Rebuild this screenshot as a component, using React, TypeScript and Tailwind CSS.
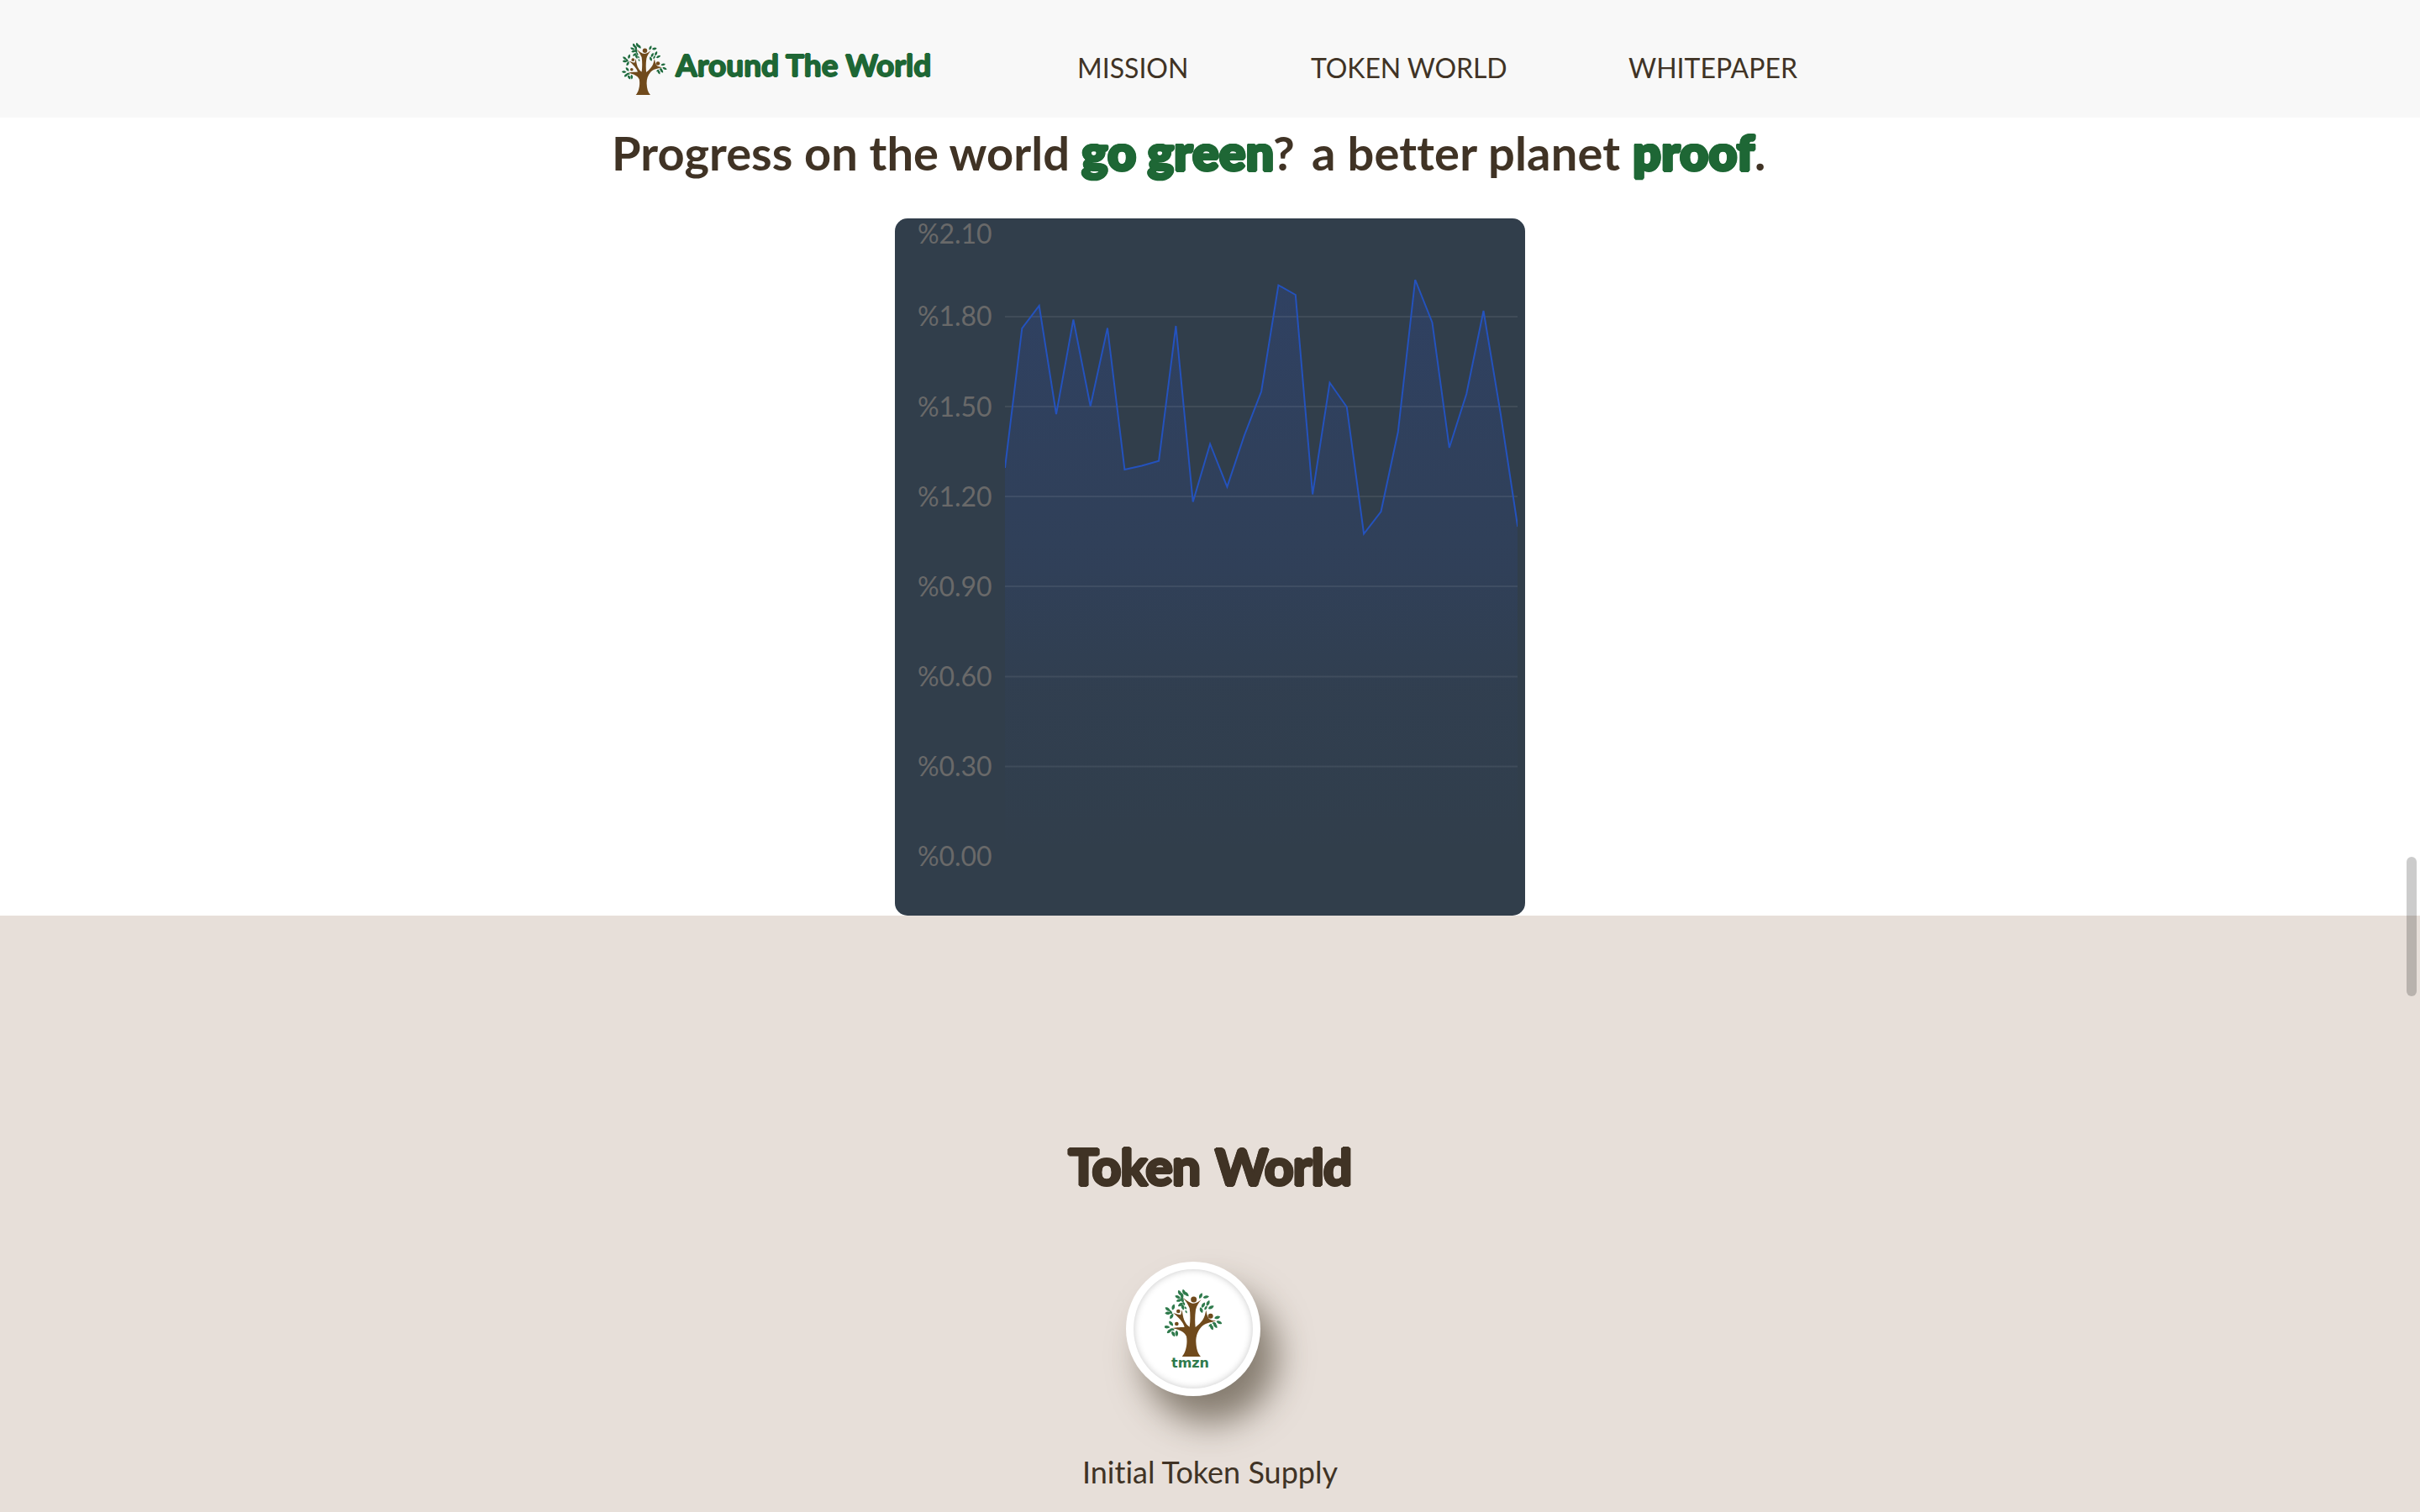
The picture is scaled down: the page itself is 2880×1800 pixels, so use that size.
const LEAVES: [number, number, number, number?][] = [
  [283, 176, 62], [276, 190, 25], [281, 202, -15], [298, 173, 70], [307, 180, 45], [291, 186, 80],
  [292, 200, 70], [286, 217, -35], [294, 226, 75], [304, 229, 60, 5], [306, 243, 65, 5], [298, 214, 70, 6],
  [358, 186, -65], [377, 190, -10], [384, 212, -65], [395, 227, -25], [367, 219, -60], [360, 237, 70],
  [376, 229, -60, 7], [240, 234, 35], [260, 226, -75], [241, 248, 0], [254, 259, -60], [251, 244, 55, 7],
  [237, 297, 5], [252, 285, 50], [246, 312, -40], [260, 322, 60], [272, 320, 88], [256, 306, 10, 7],
  [417, 263, -15], [424, 281, 25], [410, 292, 55], [397, 298, 65], [392, 291, -40, 6], [406, 284, 10, 6],
];

function TreeMark({ leaf, className }: { leaf: string; className: string }) {
  return (
    <svg viewBox="229 163 204 240" className={className} aria-hidden="true">
      <g fill="#704a1c">
        <path d="M291 403 C307 386 311 352 307 331 C300 314 280 306 256 301 C273 297 290 299 300 297 C295 280 278 262 260 247 C270 250 279 254 286 254 C289 249 289 242 291 236 C293 248 294 260 299 273 C305 285 310 292 318 297 C321 275 321 250 318 230 C312 215 303 202 293 191 C305 200 318 213 331 213 C343 213 351 206 360 199 C350 212 343 222 340 236 C337 258 337 278 339 298 C354 288 367 272 371 260 C374 252 375 244 377 237 C379 248 381 258 386 266 C392 274 402 274 412 276 C390 281 372 284 360 297 C346 313 341 330 341 350 C342 375 347 392 358 403 Z" />
        <circle cx="333" cy="199" r="10.5" />
        <circle cx="278" cy="241" r="7" />
        <circle cx="272" cy="286" r="7" />
        <circle cx="393" cy="258" r="9" />
      </g>
      <g fill={leaf}>
        {LEAVES.map(([x, y, a, r = 9], i) => (
          <path
            key={i}
            transform={`translate(${x} ${y}) rotate(${a}) scale(${r / 9})`}
            d="M-11 0 C-6 -6.5 4 -7.5 11 0 C4 7.5 -6 6.5 -11 0 Z"
          />
        ))}
      </g>
    </svg>
  );
}

const SERIES = [
  557, 391, 364, 493, 380.5, 483.5, 390.5, 559, 554.5, 548.7, 388, 597.5, 528.5, 579.5, 518.5, 466,
  339.5, 351, 588.5, 455.5, 484.5, 635.5, 609, 514, 333, 384, 533, 469, 370, 493, 627,
];
const POINTS = SERIES.map((y, i) => `${(131 + i * 20.34).toFixed(1)},${y - 260}`).join(" ");
const TICKS: [string, number][] = [
  ["%2.10", 29.5], ["%1.80", 128.4], ["%1.50", 235.5], ["%1.20", 342.5], ["%0.90", 449.5], ["%0.60", 556.5], ["%0.30", 663.5], ["%0.00", 770.5],
];
const GRID = [117, 224, 331, 438, 545.5, 652.5];

function ProgressChart() {
  return (
    <div className="mx-auto h-[830px] w-[750px] overflow-hidden rounded-[15px] bg-[#313e4b]">
      <svg viewBox="0 0 750 830" className="h-full w-full">
        <defs>
          <linearGradient id="area" x1="0" y1="73" x2="0" y2="760" gradientUnits="userSpaceOnUse">
            <stop offset="0" stopColor="#2553ee" stopOpacity="0.14" />
            <stop offset="0.5" stopColor="#2750d0" stopOpacity="0.1" />
            <stop offset="0.72" stopColor="#2a50c8" stopOpacity="0.035" />
            <stop offset="1" stopColor="#2553ee" stopOpacity="0" />
          </linearGradient>
          <clipPath id="pane">
            <rect x="131" y="0" width="610" height="830" />
          </clipPath>
        </defs>
        <g clipPath="url(#pane)">
          <polygon points={`131,760 ${POINTS} 741,760`} fill="url(#area)" />
          {GRID.map((y) => (
            <path key={y} d={`M131 ${y}H741`} stroke="#fff" strokeOpacity="0.075" strokeWidth="2" />
          ))}
          <polyline points={POINTS} fill="none" stroke="#2452bd" strokeWidth="2" />
        </g>
        <g className="fill-[#696969] font-['Lato',sans-serif] text-[32px] tracking-[-0.1px]">
          {TICKS.map(([label, y]) => (
            <text key={label} x="27" y={y}>{label}</text>
          ))}
        </g>
      </svg>
    </div>
  );
}

export default function App() {
  return (
    <div className="relative flex h-[1800px] w-[2880px] flex-col overflow-hidden bg-white font-['Lato',sans-serif] text-[#403325] [font-variant-ligatures:none]">
      <header className="flex h-[140px] shrink-0 items-start bg-[#f8f8f8] pl-[740px] whitespace-nowrap">
        <TreeMark leaf="#1e6b3e" className="mt-[51px] h-[62px] w-[54px]" />
        <span className="mt-[57px] ml-[10px] w-[306px] text-[37px] leading-[40px] font-bold tracking-[0.02px] text-[#1e6735] [text-shadow:1px_0_#1e6735,-1px_0_#1e6735,0_1px_#1e6735,0_-1px_#1e6735]">
          Around The World
        </span>
        <nav className="mt-[61px] ml-[172px] flex text-[32px] leading-[40px]">
          <a className="w-[278px]">MISSION</a>
          <a className="w-[378px] tracking-[-0.1px]">TOKEN WORLD</a>
          <a>WHITEPAPER</a>
        </nav>
      </header>

      <main className="flex flex-col">
        <section className="flex h-[950px] flex-col">
          <h1 className="mt-[9px] flex h-[111px] items-baseline pl-[728px] text-[56px] leading-[64px] font-bold whitespace-nowrap">
            <span className="w-[559px] tracking-[0.05px]">Progress on the world</span>
            <span className="w-[228px] text-[59px] font-extrabold tracking-[-0.1px] text-[#1e6735] [text-shadow:1.5px_0_#1e6735,-1.5px_0_#1e6735,0_1.5px_#1e6735,0_-1.5px_#1e6735,1px_1px_#1e6735,-1px_1px_#1e6735,1px_-1px_#1e6735,-1px_-1px_#1e6735]">
              go green
            </span>
            <span className="w-[46px]">?</span>
            <span className="w-[382px] tracking-[0.2px]">a better planet</span>
            <span className="w-[145px] text-[59px] font-extrabold text-[#1e6735] [text-shadow:1.5px_0_#1e6735,-1.5px_0_#1e6735,0_1.5px_#1e6735,0_-1.5px_#1e6735,1px_1px_#1e6735,-1px_1px_#1e6735,1px_-1px_#1e6735,-1px_-1px_#1e6735]">
              proof
            </span>
            <span>.</span>
          </h1>
          <ProgressChart />
        </section>

        <section className="flex h-[710px] flex-col items-center bg-[#e7dfd9] pt-[262px]">
          <h2 className="flex gap-[18px] text-[60px] leading-[72px] font-bold tracking-[-0.6px] [text-shadow:2px_0_#403325,-2px_0_#403325,0_2px_#403325,0_-2px_#403325,1.4px_1.4px_#403325,-1.4px_1.4px_#403325,1.4px_-1.4px_#403325,-1.4px_-1.4px_#403325]">
            <span>Token</span>
            <span>World</span>
          </h2>
          <div className="mt-[78px] mr-[40px] flex size-[160px] items-center justify-center rounded-full bg-white shadow-[20px_32px_40px_rgba(64,54,36,0.58)]">
            <div className="flex size-[142px] flex-col items-center rounded-full pt-[24px] shadow-[inset_0_0_8px_rgba(0,0,0,0.22)]">
              <TreeMark leaf="#2f7a4c" className="h-[80px] w-[68px] shrink-0" />
              <span className="mr-[7px] font-['DejaVu_Sans',sans-serif] text-[16px] leading-[16px] font-bold text-[#2f7a4c]">
                tmzn
              </span>
            </div>
          </div>
          <p className="mt-[68px] text-[36px] leading-[44px]">Initial Token Supply</p>
        </section>
      </main>

      <div className="absolute top-[1020px] right-[4px] h-[166px] w-[12px] rounded-full bg-black/20" />
    </div>
  );
}
